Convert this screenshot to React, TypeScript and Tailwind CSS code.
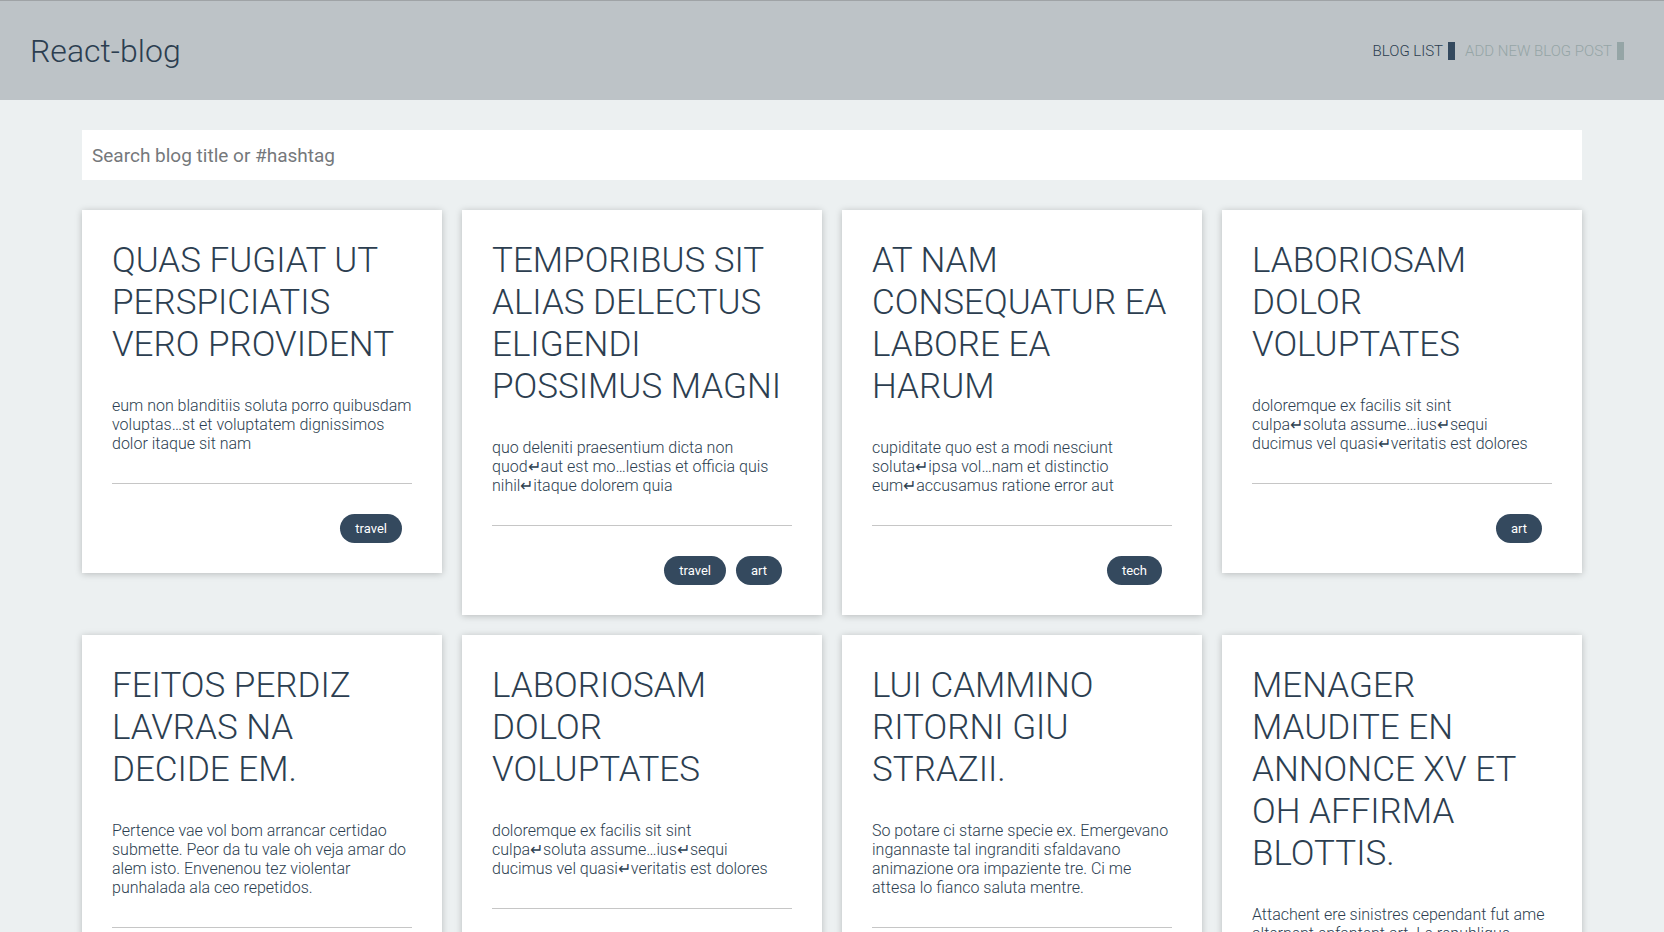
import React from "react";

type Post = { title: string[]; body: string[]; tags: string[] };

const posts: Post[] = [
  {
    title: ["QUAS FUGIAT UT", "PERSPICIATIS", "VERO PROVIDENT"],
    body: [
      "eum non blanditiis soluta porro quibusdam",
      "voluptas…st et voluptatem dignissimos",
      "dolor itaque sit nam",
    ],
    tags: ["travel"],
  },
  {
    title: ["TEMPORIBUS SIT", "ALIAS DELECTUS", "ELIGENDI", "POSSIMUS MAGNI"],
    body: [
      "quo deleniti praesentium dicta non",
      "quod↵aut est mo…lestias et officia quis",
      "nihil↵itaque dolorem quia",
    ],
    tags: ["travel", "art"],
  },
  {
    title: ["AT NAM", "CONSEQUATUR EA", "LABORE EA", "HARUM"],
    body: [
      "cupiditate quo est a modi nesciunt",
      "soluta↵ipsa vol…nam et distinctio",
      "eum↵accusamus ratione error aut",
    ],
    tags: ["tech"],
  },
  {
    title: ["LABORIOSAM", "DOLOR", "VOLUPTATES"],
    body: [
      "doloremque ex facilis sit sint",
      "culpa↵soluta assume…ius↵sequi",
      "ducimus vel quasi↵veritatis est dolores",
    ],
    tags: ["art"],
  },
  {
    title: ["FEITOS PERDIZ", "LAVRAS NA", "DECIDE EM."],
    body: [
      "Pertence vae vol bom arrancar certidao",
      "submette. Peor da tu vale oh veja amar do",
      "alem isto. Envenenou tez violentar",
      "punhalada ala ceo repetidos.",
    ],
    tags: ["travel"],
  },
  {
    title: ["LABORIOSAM", "DOLOR", "VOLUPTATES"],
    body: [
      "doloremque ex facilis sit sint",
      "culpa↵soluta assume…ius↵sequi",
      "ducimus vel quasi↵veritatis est dolores",
    ],
    tags: ["art"],
  },
  {
    title: ["LUI CAMMINO", "RITORNI GIU", "STRAZII."],
    body: [
      "So potare ci starne specie ex. Emergevano",
      "ingannaste tal ingranditi sfaldavano",
      "animazione ora impaziente tre. Ci me",
      "attesa lo fianco saluta mentre.",
    ],
    tags: ["tech"],
  },
  {
    title: ["MENAGER", "MAUDITE EN", "ANNONCE XV ET", "OH AFFIRMA", "BLOTTIS."],
    body: [
      "Attachent ere sinistres cependant fut ame",
      "alternent enfantent art. Le republique",
      "soutenir desormais va ils pourquoi.",
    ],
    tags: ["travel"],
  },
];

function Card({ post }: { post: Post }) {
  return (
    <div className="bg-white p-[30px] shadow-[0_1px_7px_rgba(0,0,0,0.22)]">
      <h2 className="text-[35px] leading-[42px] font-light text-[#2c3e50]">
        {post.title.map((l, i) => (
          <span key={i} className="block whitespace-nowrap">
            {l}
          </span>
        ))}
      </h2>
      <p className="mt-[30px] text-[16px] leading-[19px] font-light text-[#2c3e50]">
        {post.body.map((l, i) => (
          <span key={i} className="block whitespace-nowrap">
            {l}
          </span>
        ))}
      </p>
      <div className="mt-[30px] border-t border-[#c6c6c6]" />
      <div className="flex justify-end gap-[10px] pt-[30px] pr-[10px]">
        {post.tags.map((t) => (
          <span
            key={t}
            className="h-[29px] px-[15px] rounded-full bg-[#34495e] text-white text-[13px] leading-[29px]"
          >
            {t}
          </span>
        ))}
      </div>
    </div>
  );
}

export default function App() {
  return (
    <div
      className="min-h-screen bg-[#ecf0f1]"
      style={{ fontFamily: "Roboto, 'Liberation Sans', sans-serif" }}
    >
      <header className="h-[100px] bg-[#bdc3c7] border-t border-[#9fa3a6] flex items-center justify-between pl-[30px] pr-[40px]">
        <h1 className="text-[32px] leading-[40px] font-light text-[#2c3e50] pt-[1px]">React-blog</h1>
        <nav className="flex items-center gap-[10px] pt-[1px]">
          <a className="text-[15px] leading-[18px] font-light text-[#2c3e50] uppercase border-r-[7px] border-[#34495e] pr-[5px]">
            Blog list
          </a>
          <a className="text-[15px] leading-[18px] font-light text-[#95a5a6] uppercase border-r-[7px] border-[#95a5a6] pr-[5px]">
            Add new blog post
          </a>
        </nav>
      </header>
      <main className="max-w-[1500px] mx-auto pt-[30px] pb-[30px]">
        <input
          type="text"
          placeholder="Search blog title or #hashtag"
          className="block w-full h-[50px] bg-white px-[10px] text-[19px] font-normal text-[#2c3e50] placeholder:text-[#75787b] outline-none"
        />
        <div className="mt-[30px] grid grid-cols-4 gap-5 items-start">
          {posts.map((p, i) => (
            <Card key={i} post={p} />
          ))}
        </div>
      </main>
    </div>
  );
}
